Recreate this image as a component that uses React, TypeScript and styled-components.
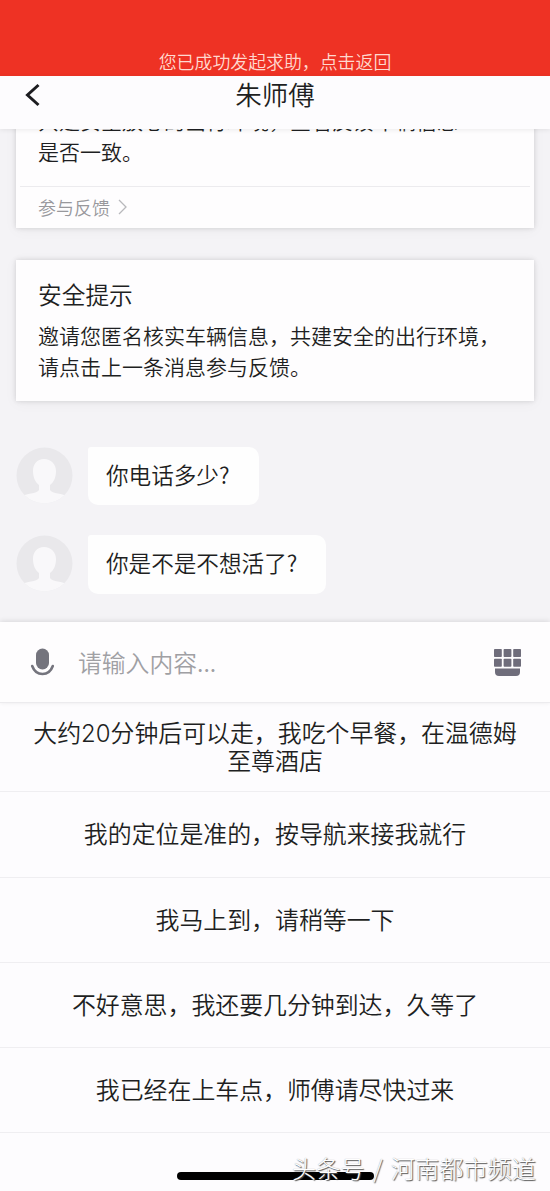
import React from "react";
import styled, { createGlobalStyle } from "styled-components";

const GlobalStyle = createGlobalStyle`
  * { box-sizing: border-box; }
  body {
    margin: 0;
    background: #fdfcfe;
    color: #1e1f22;
    font-family: "Noto Sans CJK SC", sans-serif;
    font-weight: 350;
  }
`;

const Screen = styled.div`
  position: relative;
  display: flex;
  flex-direction: column;
  width: 550px;
  height: 1191px;
  overflow: hidden;
  background: #fdfcfe;
`;

const Banner = styled.div`
  display: flex;
  flex: none;
  align-items: flex-end;
  justify-content: center;
  height: 76px;
  padding-bottom: 2px;
  background: #ee3224;
  color: #ffd9cf;
  font-size: 17.9px;
  line-height: 26px;
`;

const Header = styled.header`
  position: relative;
  z-index: 1;
  display: grid;
  flex: none;
  grid-template-columns: 60px 1fr 60px;
  height: 53px;
  background: #fdfcfe;
  box-shadow: 0 1px 5px rgba(0, 0, 0, 0.08);
`;

const BackIcon = styled.svg`
  width: 16px;
  height: 24px;
  margin: 7px 0 0 25px;
`;

const Title = styled.h1`
  align-self: start;
  margin: 0;
  font-size: 26.5px;
  font-weight: 350;
  line-height: 35px;
  text-align: center;
`;

const Chat = styled.main`
  display: flex;
  flex: none;
  flex-direction: column;
  height: 493px;
  padding: 0 16px;
  overflow: hidden;
  background: #f4f3f6;
`;

const Card = styled.section<{ $height: number; $pull?: number; $gap: number }>`
  flex: none;
  height: ${(p) => p.$height}px;
  margin-top: ${(p) => -(p.$pull ?? 0)}px;
  margin-bottom: ${(p) => p.$gap}px;
  background: #fefdfe;
  box-shadow: 0 0 5px rgba(0, 0, 0, 0.14), 0 2px 14px rgba(0, 0, 0, 0.04);
`;

const CardTitle = styled.h2`
  margin: 0;
  padding: 16px 22px 0;
  font-size: 23.7px;
  font-weight: 350;
  line-height: 36px;
`;

const CardText = styled.p<{ $top?: number }>`
  margin: 0;
  padding: ${(p) => p.$top ?? 0}px 22px 0;
  font-size: 21px;
  line-height: 31px;
  white-space: nowrap;
`;

const Feedback = styled.div`
  display: flex;
  align-items: center;
  height: 42px;
  margin: 19px 4px 0;
  padding: 0 18px 1px;
  border-top: 1px solid #ecebee;
  color: #98989c;
  font-size: 18px;
  gap: 8px;
`;

const MoreIcon = styled.svg`
  width: 9px;
  height: 16px;
`;

const Message = styled.div<{ $gap: number }>`
  display: flex;
  flex: none;
  gap: 15px;
  margin-bottom: ${(p) => p.$gap}px;
`;

const Avatar = styled.svg`
  width: 57px;
  height: 57px;
`;

const Bubble = styled.div<{ $height: number }>`
  height: ${(p) => p.$height}px;
  padding: 0 29px 0 18px;
  border-radius: 3px 10px 10px 10px;
  background: #fefefe;
  font-size: 22.6px;
  line-height: ${(p) => p.$height - 3}px;
`;

const InputBar = styled.div`
  position: relative;
  z-index: 1;
  display: flex;
  flex: none;
  align-items: center;
  height: 81px;
  padding: 0 29px;
  border-bottom: 1px solid #ecebee;
  background: #fefdfe;
  box-shadow: 0 -1px 5px rgba(0, 0, 0, 0.11);
`;

const MicIcon = styled.svg`
  width: 26px;
  height: 28px;
`;

const Placeholder = styled.span`
  flex: 1;
  margin-left: 23px;
  color: #a0a0a4;
  font-size: 23.8px;
  line-height: 34px;
`;

const KeyboardIcon = styled.svg`
  width: 27px;
  height: 27px;
`;

const Reply = styled.div<{ $height: number }>`
  display: flex;
  flex: none;
  align-items: center;
  justify-content: center;
  height: ${(p) => p.$height}px;
  padding: 1px 20px 0;
  border-bottom: 1px solid #efeef1;
  font-family: Inter, "Noto Sans CJK SC", sans-serif;
  font-size: 23.9px;
  line-height: 28px;
  text-align: center;
  white-space: pre-line;
`;

const HomeArea = styled.footer`
  display: flex;
  flex: 1;
  justify-content: center;
  padding-top: 39px;
`;

const HomeBar = styled.div`
  width: 197px;
  height: 8px;
  border-radius: 4px;
  background: #000;
`;

const Watermark = styled.div`
  position: absolute;
  right: 14px;
  bottom: 6px;
  color: #fff;
  font-size: 24.2px;
  font-weight: 300;
  line-height: 34px;
  text-shadow: 1px 1px 1px #555, 0 0 1px #999;
  white-space: pre;
  word-spacing: 3px;
`;

const messages = [
  { text: "你电话多少?", height: 58, gap: 30 },
  { text: "你是不是不想活了?", height: 59, gap: 0 },
];

const replies = [
  { text: "大约20分钟后可以走，我吃个早餐，在温德姆\n至尊酒店", height: 89 },
  { text: "我的定位是准的，按导航来接我就行", height: 86 },
  { text: "我马上到，请稍等一下", height: 85 },
  { text: "不好意思，我还要几分钟到达，久等了", height: 85 },
  { text: "我已经在上车点，师傅请尽快过来", height: 85 },
];

function Person() {
  return (
    <Avatar viewBox="0 0 57 57">
      <defs>
        <clipPath id="avatar-circle">
          <circle cx="28.5" cy="28.5" r="28" />
        </clipPath>
      </defs>
      <g clipPath="url(#avatar-circle)">
        <rect width="57" height="57" fill="#e9e8eb" />
        <path
          d="M28 12c-7 0-11 5-11 12 0 6 2 11 6 14v5c-2 4-13 3-18 7v8h47v-8c-5-4-16-3-18-7v-5c4-3 6-8 6-14 0-7-5-12-12-12Z"
          fill="#f9f8fa"
        />
      </g>
    </Avatar>
  );
}

export default function App() {
  return (
    <>
      <GlobalStyle />
      <Screen>
        <Banner>您已成功发起求助，点击返回</Banner>
        <Header>
          <BackIcon viewBox="0 0 16 24" fill="none" stroke="#1c1c20" strokeWidth="3">
            <path d="M13.5 2 2.5 12l11 10" />
          </BackIcon>
          <Title>朱师傅</Title>
        </Header>
        <Chat>
          <Card $height={123} $pull={24} $gap={32}>
            <CardText>
              共建安全放心的出行环境，查看反馈车辆信息
              <br />
              是否一致。
            </CardText>
            <Feedback>
              参与反馈
              <MoreIcon viewBox="0 0 9 16" fill="none" stroke="#b8b8bc" strokeWidth="1.3">
                <path d="m1 1 7 7-7 7" />
              </MoreIcon>
            </Feedback>
          </Card>
          <Card $height={141} $gap={46}>
            <CardTitle>安全提示</CardTitle>
            <CardText $top={8}>
              邀请您匿名核实车辆信息，共建安全的出行环境，
              <br />
              请点击上一条消息参与反馈。
            </CardText>
          </Card>
          {messages.map((m) => (
            <Message key={m.text} $gap={m.gap}>
              <Person />
              <Bubble $height={m.height}>{m.text}</Bubble>
            </Message>
          ))}
        </Chat>
        <InputBar>
          <MicIcon viewBox="0 0 26 28">
            <rect x="7" y="0.5" width="13" height="21" rx="6.5" fill="#74747d" />
            <path
              d="M3.2 18c3.8 10.6 16.8 10.6 20.6 0"
              fill="none"
              stroke="#74747d"
              strokeWidth="2.6"
              strokeLinecap="round"
            />
          </MicIcon>
          <Placeholder>请输入内容...</Placeholder>
          <KeyboardIcon viewBox="0 0 27 27" fill="#6f6d7b">
            <rect x="0" y="0" width="7.8" height="8" rx="0.8" />
            <rect x="9.6" y="0" width="7.8" height="8" rx="0.8" />
            <rect x="19.2" y="0" width="7.8" height="8" rx="0.8" />
            <rect x="0" y="9.8" width="7.8" height="8" rx="0.8" />
            <rect x="9.6" y="9.8" width="7.8" height="8" rx="0.8" />
            <rect x="19.2" y="9.8" width="7.8" height="8" rx="0.8" />
            <path d="M1 19.5h25v3.5q0 4-4 4H5q-4 0-4-4Z" />
          </KeyboardIcon>
        </InputBar>
        {replies.map((r) => (
          <Reply key={r.text} $height={r.height}>
            {r.text}
          </Reply>
        ))}
        <HomeArea>
          <HomeBar />
        </HomeArea>
        <Watermark>头条号 / 河南都市频道</Watermark>
      </Screen>
    </>
  );
}
